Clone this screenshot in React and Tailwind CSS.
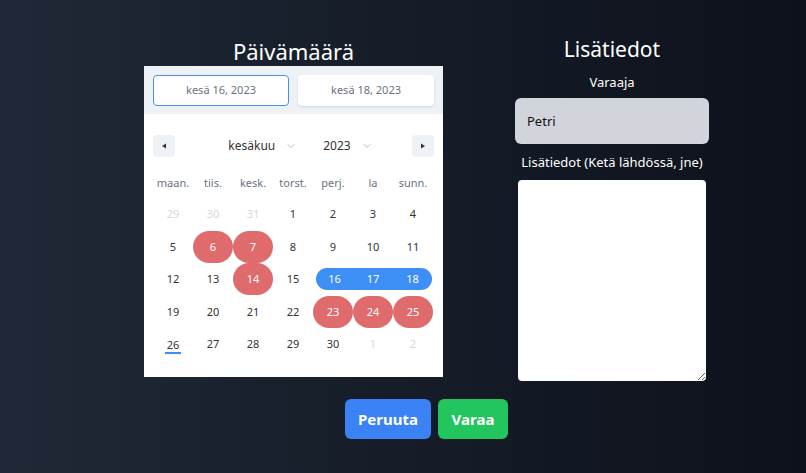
import { ChevronDown } from "lucide-react";

const WEEKDAYS = ["maan.", "tiis.", "kesk.", "torst.", "perj.", "la", "sunn."];

const WEEKS = [
  [29, 30, 31, 1, 2, 3, 4],
  [5, 6, 7, 8, 9, 10, 11],
  [12, 13, 14, 15, 16, 17, 18],
  [19, 20, 21, 22, 23, 24, 25],
  [26, 27, 28, 29, 30, 1, 2],
];

const BOOKED = [6, 7, 14, 23, 24, 25];
const RANGE_START = 16;
const RANGE_END = 18;

function DayCell({ day, outside }) {
  const booked = !outside && BOOKED.includes(day);
  const inRange = !outside && day >= RANGE_START && day <= RANGE_END;

  if (inRange) {
    return (
      <div className="w-10 h-full flex items-center">
        <div
          className={
            "h-[22px] w-full bg-[#3d8ff5] text-white flex items-center justify-center " +
            (day === RANGE_START ? "rounded-l-full ml-[3px] " : "") +
            (day === RANGE_END ? "rounded-r-full mr-px " : "")
          }
        >
          {day}
        </div>
      </div>
    );
  }

  if (booked) {
    return (
      <div className="w-10 h-full flex items-center justify-center">
        <div className="w-10 h-8 rounded-full bg-[#e06b6c] text-white flex items-center justify-center">
          {day}
        </div>
      </div>
    );
  }

  const today = !outside && day === 26;
  return (
    <div className="w-10 h-full flex items-center justify-center">
      <span
        className={
          (outside ? "text-[#d4d8de] " : "text-[#333] ") +
          (today ? "border-b-2 border-[#3d8ff5] px-[2px] leading-[15px] translate-y-[1px]" : "")
        }
      >
        {day}
      </span>
    </div>
  );
}

function Calendar() {
  return (
    <div className="w-[299px] bg-white">
      {/* valitut päivät */}
      <div className="bg-[#eef1f5] px-[9px] pt-[9px] pb-[8px] flex gap-[9px]">
        <div className="w-[136px] h-[31px] bg-white border border-[#4a90e8] rounded flex items-center justify-center text-[11px] text-gray-500">
          kesä 16, 2023
        </div>
        <div className="w-[136px] h-[31px] bg-white rounded shadow-sm flex items-center justify-center text-[11px] text-gray-500">
          kesä 18, 2023
        </div>
      </div>

      <div className="px-[9px] pt-[21px] pb-[16px]">
        {/* navigointi */}
        <div className="flex items-center justify-between h-[22px]">
          <button className="w-[22px] h-[22px] rounded bg-[#eef1f5] flex items-center justify-center">
            <svg width="6" height="6" viewBox="0 0 6 6">
              <polygon points="5,0.5 5,5.5 1,3" fill="#333" />
            </svg>
          </button>
          <div className="flex items-center gap-[26px] text-[12px] text-[#333] ml-[14px]">
            <div className="flex items-center">
              kesäkuu
              <ChevronDown size={12} strokeWidth={1.5} className="text-gray-400 ml-[10px]" />
            </div>
            <div className="flex items-center">
              2023
              <ChevronDown size={12} strokeWidth={1.5} className="text-gray-400 ml-[10px]" />
            </div>
          </div>
          <button className="w-[22px] h-[22px] rounded bg-[#eef1f5] flex items-center justify-center">
            <svg width="6" height="6" viewBox="0 0 6 6">
              <polygon points="1,0.5 1,5.5 5,3" fill="#333" />
            </svg>
          </button>
        </div>

        {/* viikonpäivät */}
        <div className="flex mt-[14px] h-6 items-center text-[11px] text-gray-500">
          {WEEKDAYS.map((w) => (
            <div key={w} className="w-10 text-center">
              {w}
            </div>
          ))}
        </div>

        <div className="mt-[3px] text-[11px]">
          {WEEKS.map((week, wi) => (
            <div key={wi} className="flex h-[32.5px]">
              {week.map((d, di) => (
                <DayCell
                  key={di}
                  day={d}
                  outside={(wi === 0 && d > 20) || (wi === 4 && d < 10)}
                />
              ))}
            </div>
          ))}
        </div>
      </div>
    </div>
  );
}

export default function App() {
  return (
    <div
      className="w-[806px] h-[473px] bg-gradient-to-r from-[#1f2937] to-[#0d111b] text-white overflow-hidden"
      style={{ fontFamily: '"Noto Sans", "Open Sans", sans-serif' }}
    >
      <div className="flex justify-center pl-[47px] gap-[72px]">
        {/* Päivämäärä */}
        <div className="flex flex-col items-center">
          <h2 className="text-[22px] leading-[26px] mt-[38px] mb-[2px]">Päivämäärä</h2>
          <Calendar />
        </div>

        {/* Lisätiedot */}
        <div className="w-[194px] flex flex-col items-center">
          <h2 className="text-[21px] leading-[26px] mt-[36px]">Lisätiedot</h2>
          <label className="text-[13px] mt-[11px] leading-[18px]">Varaaja</label>
          <input
            readOnly
            value="Petri"
            className="mt-[7px] w-full h-[46px] rounded-md bg-[#d1d5db] text-[#111] text-[13px] px-3 outline-none"
          />
          <label className="text-[13px] mt-[9px] leading-[18px] whitespace-nowrap">
            Lisätiedot (Ketä lähdössä, jne)
          </label>
          <textarea className="mt-[9px] w-[188px] h-[201px] rounded bg-white text-black text-sm p-2 outline-none" />
        </div>
      </div>

      <div className="flex justify-center pl-[47px] gap-[7px] mt-[18px]">
        <button className="h-10 w-[86px] rounded-md bg-[#3b82f6] text-white font-bold text-[15px]">
          Peruuta
        </button>
        <button className="h-10 w-[70px] rounded-md bg-[#22c55e] text-white font-bold text-[15px]">
          Varaa
        </button>
      </div>
    </div>
  );
}
